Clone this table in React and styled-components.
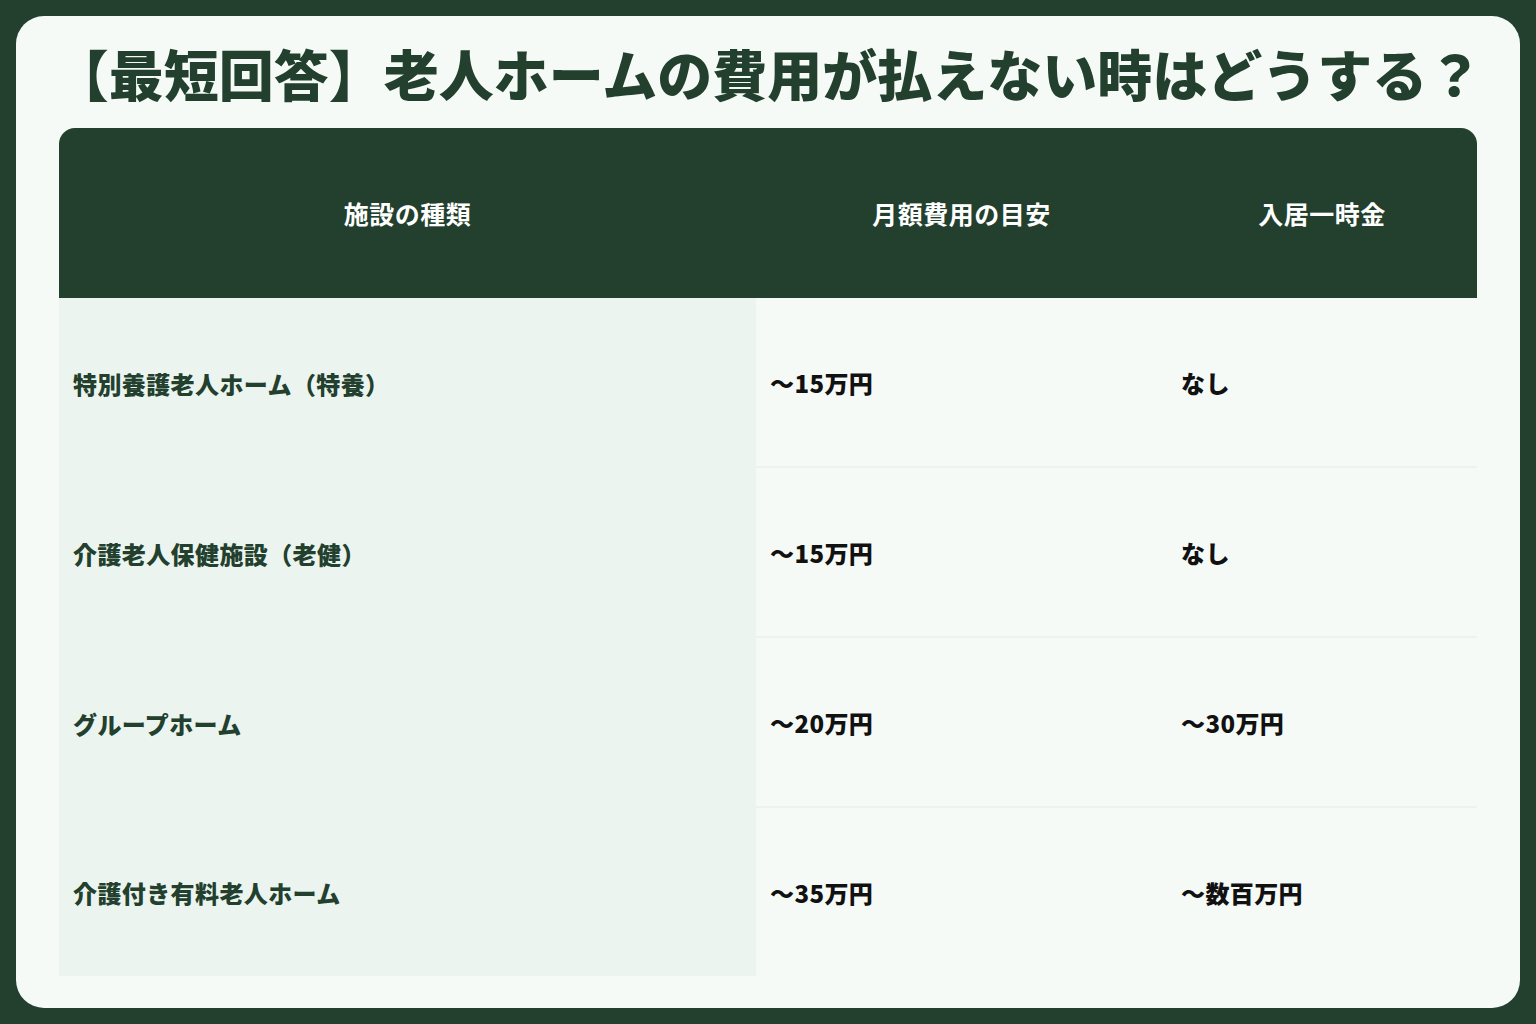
import React from 'react'
import styled, { createGlobalStyle } from 'styled-components'

const GlobalStyle = createGlobalStyle`
  html, body {
    margin: 0;
    padding: 0;
    background: #22402d;
  }
  body {
    font-family: "Noto Sans CJK JP", "Noto Sans", sans-serif;
  }
`

const Page = styled.div`
  width: 1536px;
  height: 1024px;
  box-sizing: border-box;
  padding: 16px;
  background: #22402d;
`

const Card = styled.div`
  height: 100%;
  box-sizing: border-box;
  background: #f5faf7;
  border-radius: 28px;
  padding: 0 43px 32px;
  display: flex;
  flex-direction: column;
`

const Title = styled.h1`
  margin: 0;
  height: 112px;
  display: flex;
  align-items: center;
  justify-content: center;
  font-size: 55px;
  font-weight: 900;
  color: #22402d;
  letter-spacing: 0;
  white-space: nowrap;
`

const Table = styled.div`
  display: grid;
  grid-template-columns: 697px 411px 310px;
  grid-template-rows: 170px 170px 170px 170px 168px;
`

const HeadCell = styled.div`
  background: #22402d;
  color: #fff;
  font-size: 25px;
  font-weight: 700;
  letter-spacing: 0.5px;
  display: flex;
  align-items: center;
  justify-content: center;
  border-top-left-radius: ${p => (p.$first ? '16px' : '0')};
  border-top-right-radius: ${p => (p.$last ? '16px' : '0')};
`

const Cell = styled.div`
  display: flex;
  align-items: center;
  padding-left: 14px;
  font-size: 24px;
  font-weight: 800;
  letter-spacing: 0.4px;
  color: ${p => (p.$name ? '#22402d' : '#111')};
  background: ${p => (p.$name ? '#ebf4ef' : '#f5faf7')};
  border-bottom: ${p => (p.$lastRow || p.$name ? 'none' : '2px solid #ecf2ee')};
  box-sizing: border-box;
`

const rows = [
  { name: '特別養護老人ホーム（特養）', monthly: '〜15万円', initial: 'なし' },
  { name: '介護老人保健施設（老健）', monthly: '〜15万円', initial: 'なし' },
  { name: 'グループホーム', monthly: '〜20万円', initial: '〜30万円' },
  { name: '介護付き有料老人ホーム', monthly: '〜35万円', initial: '〜数百万円' },
]

export default function App () {
  return (
    <>
      <GlobalStyle />
      <Page>
        <Card>
          <Title>【最短回答】老人ホームの費用が払えない時はどうする？</Title>
          <Table>
            <HeadCell $first>施設の種類</HeadCell>
            <HeadCell>月額費用の目安</HeadCell>
            <HeadCell $last>入居一時金</HeadCell>
            {rows.map((r, i) => {
              const lastRow = i === rows.length - 1
              return (
                <React.Fragment key={r.name}>
                  <Cell $name $lastRow={lastRow}>{r.name}</Cell>
                  <Cell $lastRow={lastRow}>{r.monthly}</Cell>
                  <Cell $lastRow={lastRow}>{r.initial}</Cell>
                </React.Fragment>
              )
            })}
          </Table>
        </Card>
      </Page>
    </>
  )
}
